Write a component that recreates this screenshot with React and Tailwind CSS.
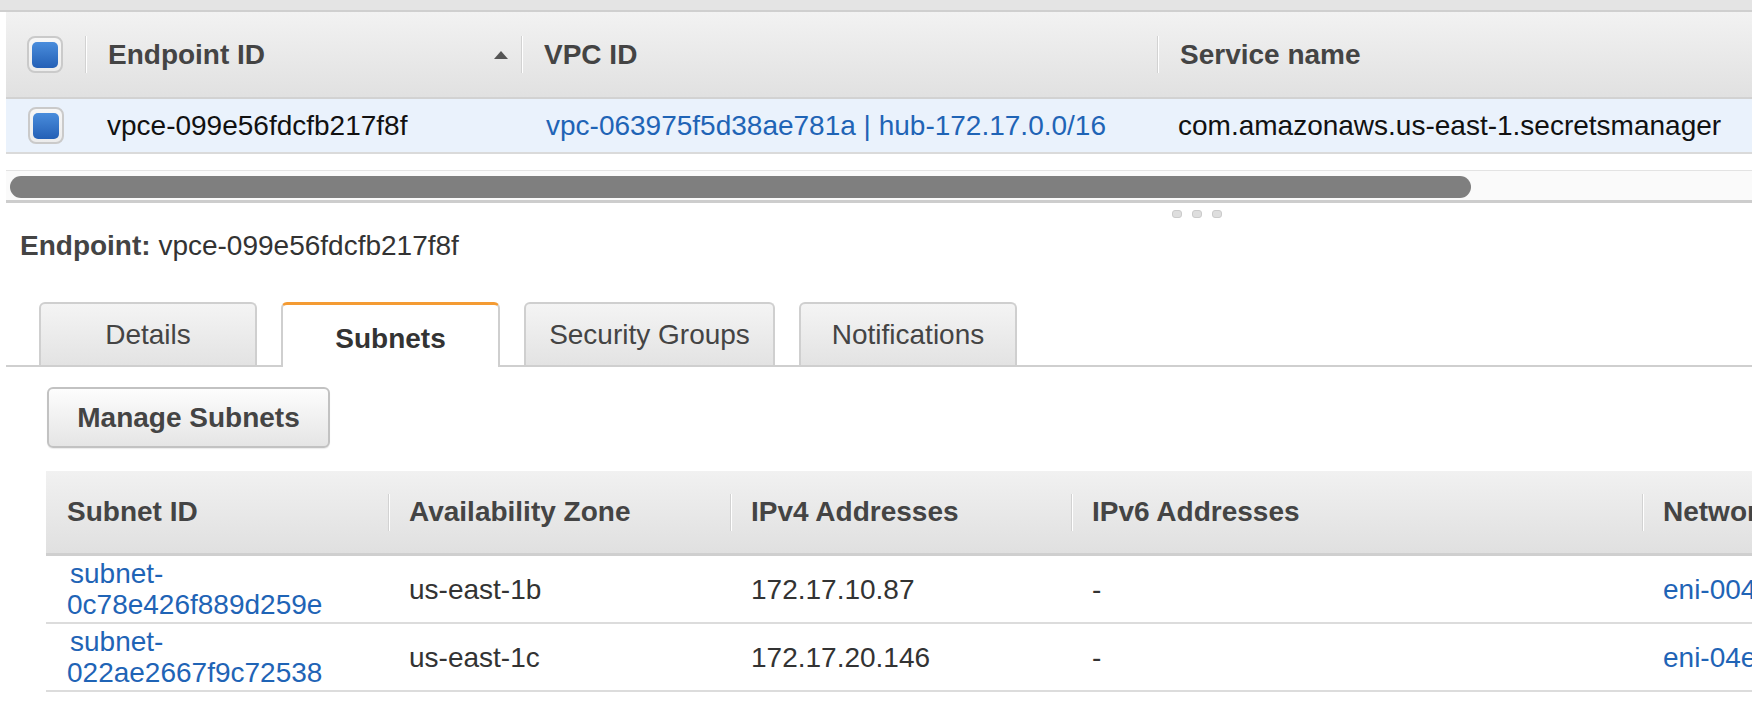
import React from 'react';

const Checkbox = () => (
    <div className="w-[36px] h-[37px] rounded-[8px] border-2 border-[#cacaca] bg-gradient-to-b from-[#f7f7f7] to-[#ececec] flex items-center justify-center">
        <div className="w-[26px] h-[26px] rounded-[5px] bg-gradient-to-b from-[#4a8ddc] to-[#2460b6]" />
    </div>
);

const Divider = () => (
    <div className="w-[2px] h-[37px] shrink-0 border-l border-[#d2d2d2] border-r border-r-white" />
);

const SortUp = () => (
    <svg width="14" height="8" viewBox="0 0 14 8" className="shrink-0">
        <polygon points="7,0 14,8 0,8" fill="#555" />
    </svg>
);

const Tab = ({ label, width, active }) => {
    if (active) {
        return (
            <div className="w-[219px] h-[65px] -mb-[2px] rounded-t-[6px] border-2 border-b-0 border-[#cfcfcf] border-t-[3px] border-t-[#f49b33] bg-white flex items-center justify-center pt-[6px] font-bold text-[#333]">
                {label}
            </div>
        );
    }
    return (
        <div
            className="h-[63px] rounded-t-[6px] border-2 border-b-0 border-[#cfcfcf] bg-gradient-to-b from-[#f4f4f4] to-[#e3e3e3] flex items-center justify-center text-[#444]"
            style={{ width }}
        >
            {label}
        </div>
    );
};

const subnets = [
    { id: ['subnet-', '0c78e426f889d259e'], az: 'us-east-1b', ipv4: '172.17.10.87', ipv6: '-', eni: 'eni-004' },
    { id: ['subnet-', '022ae2667f9c72538'], az: 'us-east-1c', ipv4: '172.17.20.146', ipv6: '-', eni: 'eni-04e' },
];

export default function App() {
    return (
        <div className="w-[1752px] h-[708px] overflow-hidden bg-white font-['Liberation_Sans',Arial,sans-serif] text-[28px]">
            {/* top endpoints table */}
            <div className="h-[12px] bg-[#e4e4e4] border-b-2 border-[#cfcfcf]" />
            <div className="pl-[6px]">
                <div className="h-[87px] flex items-center bg-gradient-to-b from-[#f2f2f2] to-[#e1e1e1] border-b-2 border-[#d2d2d2] font-bold text-[#444]">
                    <div className="w-[79px] shrink-0 pl-[21px]">
                        <Checkbox />
                    </div>
                    <div className="w-[436px] shrink-0 flex items-center">
                        <Divider />
                        <span className="ml-[21px]">Endpoint ID</span>
                        <div className="ml-auto mr-[13px]">
                            <SortUp />
                        </div>
                    </div>
                    <div className="w-[636px] shrink-0 flex items-center">
                        <Divider />
                        <span className="ml-[21px]">VPC ID</span>
                    </div>
                    <div className="flex-1 flex items-center">
                        <Divider />
                        <span className="ml-[21px]">Service name</span>
                    </div>
                </div>
                <div className="h-[55px] flex items-center bg-[#eaf2fc] border-b-2 border-[#dadada] text-[#111]">
                    <div className="w-[79px] shrink-0 pl-[22px]">
                        <Checkbox />
                    </div>
                    <div className="w-[436px] shrink-0 pl-[22px] whitespace-nowrap">vpce-099e56fdcfb217f8f</div>
                    <div className="w-[636px] shrink-0 pl-[25px] whitespace-nowrap text-[#1f64b6]">
                        vpc-063975f5d38ae781a | hub-172.17.0.0/16
                    </div>
                    <div className="flex-1 pl-[21px] whitespace-nowrap">com.amazonaws.us-east-1.secretsmanager</div>
                </div>
            </div>

            {/* horizontal scrollbar */}
            <div className="mt-[16px] ml-[6px] h-[33px] bg-[#fafafa] border-t border-[#e3e3e3] border-b-[3px] border-b-[#cdcdcd] pt-[5px]">
                <div className="ml-[4px] w-[1461px] h-[22px] rounded-full bg-[#7f7f7f]" />
            </div>

            {/* split grip */}
            <div className="h-[27px] flex gap-[10px] pl-[1172px] pt-[7px]">
                <div className="w-[10px] h-[8px] rounded-[3px] bg-[#dedede] border border-[#cbcbcb]" />
                <div className="w-[10px] h-[8px] rounded-[3px] bg-[#dedede] border border-[#cbcbcb]" />
                <div className="w-[10px] h-[8px] rounded-[3px] bg-[#dedede] border border-[#cbcbcb]" />
            </div>

            {/* detail pane */}
            <div className="h-[32px] leading-[32px] pl-[20px] text-[#333] whitespace-nowrap">
                <span className="font-bold text-[#444]">Endpoint:</span> vpce-099e56fdcfb217f8f
            </div>

            <div className="mt-[40px] ml-[6px] flex items-end gap-[24px] pl-[33px] border-b-2 border-[#cfcfcf]">
                <Tab label="Details" width={218} />
                <Tab label="Subnets" active />
                <Tab label="Security Groups" width={251} />
                <Tab label="Notifications" width={218} />
            </div>

            <div className="mt-[20px] ml-[47px]">
                <button className="w-[283px] h-[61px] rounded-[6px] border-2 border-[#c2c2c2] bg-gradient-to-b from-[#fdfdfd] to-[#e5e5e5] shadow-[0_1px_1px_rgba(0,0,0,0.08)] font-bold text-[#444]">
                    Manage Subnets
                </button>
            </div>

            {/* subnets table */}
            <div className="mt-[23px] ml-[46px]">
                <div className="h-[85px] flex items-center bg-gradient-to-b from-[#f1f1f1] to-[#e0e0e0] border-b-[3px] border-[#cfcfcf] font-bold text-[#444] whitespace-nowrap">
                    <div className="w-[342px] shrink-0 pl-[21px]">Subnet ID</div>
                    <div className="w-[342px] shrink-0 flex items-center">
                        <Divider />
                        <span className="ml-[19px]">Availability Zone</span>
                    </div>
                    <div className="w-[341px] shrink-0 flex items-center">
                        <Divider />
                        <span className="ml-[19px]">IPv4 Addresses</span>
                    </div>
                    <div className="w-[571px] shrink-0 flex items-center">
                        <Divider />
                        <span className="ml-[19px]">IPv6 Addresses</span>
                    </div>
                    <div className="flex-1 flex items-center">
                        <Divider />
                        <span className="ml-[19px]">Network Interface</span>
                    </div>
                </div>
                {subnets.map((s) => (
                    <div key={s.id[1]} className="h-[68px] flex items-center border-b-2 border-[#dcdcdc] text-[#333] whitespace-nowrap leading-[31px]">
                        <div className="w-[342px] shrink-0 pl-[21px] text-[#1f64b6]">
                            <div className="pl-[3px]">{s.id[0]}</div>
                            <div>{s.id[1]}</div>
                        </div>
                        <div className="w-[342px] shrink-0 pl-[21px]">{s.az}</div>
                        <div className="w-[341px] shrink-0 pl-[21px]">{s.ipv4}</div>
                        <div className="w-[571px] shrink-0 pl-[21px]">{s.ipv6}</div>
                        <div className="flex-1 pl-[21px] text-[#1f64b6]">{s.eni}</div>
                    </div>
                ))}
            </div>
        </div>
    );
}
